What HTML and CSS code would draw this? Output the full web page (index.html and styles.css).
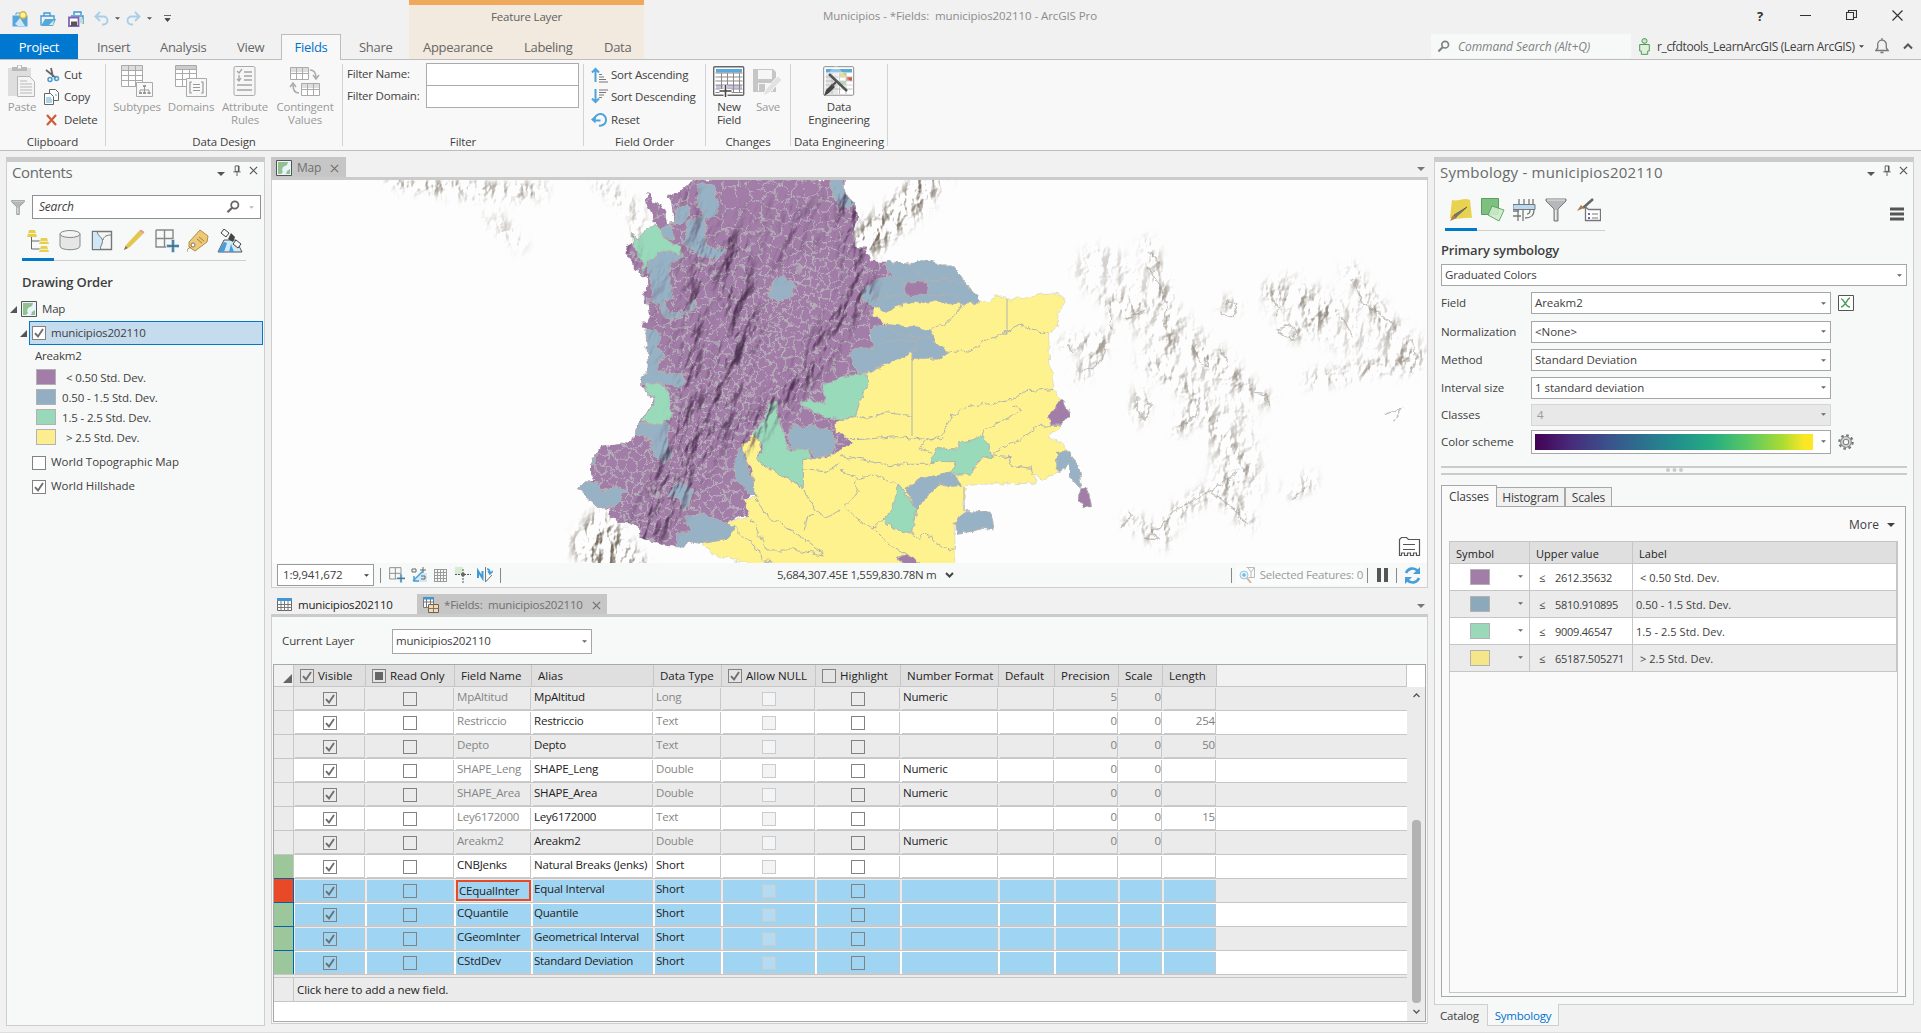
FILE: index.html
```html
<!DOCTYPE html>
<html lang="en">
<head>
<meta charset="utf-8">
<title>Municipios - ArcGIS Pro</title>
<link rel="stylesheet" href="styles.css">
</head>
<body>
<svg class="defs" width="0" height="0">
  <symbol id="tri" viewBox="0 0 8 4"><path d="M0 0h8L4 4z" fill="currentColor"/></symbol>
  <symbol id="check" viewBox="0 0 12 12"><path d="M2 6.2l3 3.3L10 2" fill="none" stroke="#6e6e6e" stroke-width="1.9"/></symbol>
  <symbol id="x" viewBox="0 0 10 10"><path d="M1 1l8 8M9 1l-8 8" fill="none" stroke="currentColor" stroke-width="1.3"/></symbol>
  <symbol id="pin" viewBox="0 0 8 12"><path d="M2 1h4v6H2zM0 7.5h8M4 8v4" fill="none" stroke="currentColor"/><path d="M5 1h1.5v6H5z" fill="currentColor"/></symbol>
  <symbol id="lens" viewBox="0 0 14 14"><circle cx="8.8" cy="5" r="3.6" fill="none" stroke="currentColor" stroke-width="1.8"/><path d="M6.3 7.5L1.5 12.3" stroke="currentColor" stroke-width="2.2"/></symbol>
  <symbol id="funnel" viewBox="0 0 22 24"><path d="M1 1h20v2l-8 8v12h-4V11L1 3z" fill="#b5b7ba" stroke="#7a7a7a"/><path d="M2 2h18" stroke="#e8e8e8"/><path d="M10 12h1.5v10H10z" fill="#eee"/></symbol>
  <symbol id="mapico" viewBox="0 0 16 16"><path d="M.5.5h15v15H.5z" fill="#e8f3fb" stroke="#555"/><path d="M2 2h10l-1 3-4 2-1 3 1 2-2 2H2z" fill="#93c08f"/><path d="M10 14l1-3 3-2v5z" fill="#93c08f"/></symbol>
  <symbol id="addgrid" viewBox="0 0 24 24"><path d="M1 1h17v9M1 1v17h10M1 9.500h17M9.500 1v17" fill="none" stroke="#888" stroke-width="1.400"/><path d="M18 10.500v13M11.500 17h13" stroke="#9bd0f0" stroke-width="3.600"/><path d="M18 11v12M12 17h12" stroke="#45606e" stroke-width="1.400"/></symbol>
</svg>

<header class="titlebar">
  <div class="qat">
    <svg width="16" height="16"><path d="M.5 4.500h15v11H.5z" fill="#56a7dc"/><path d="M4 4V2h6v2" fill="none" stroke="#56a7dc"/><path d="M3 13l5-6 5 8H6z" fill="#cfe8f7"/><circle cx="11" cy="4" r="3.200" fill="#fff3a0" stroke="#d6b93a" stroke-width="1.400"/></svg>
    <svg width="16" height="16"><path d="M1 14.500V5h13v3M4 5V2h6v3" fill="none" stroke="#3f97d3" stroke-width="1.300"/><path d="M1 15l4-7h11l-3 7z" fill="#56a7dc"/><path d="M9 14l5-5-1 5z" fill="#d9efd5"/></svg>
    <svg width="17" height="16"><path d="M3 5h12v8M6 4V1h7v3" fill="none" stroke="#3f97d3" stroke-width="1.400"/><path d="M1 6.500h9.500V15H1z" fill="#fff" stroke="#8264b4" stroke-width="1.800"/><path d="M3 10.500h6V15H3z" fill="#555"/><path d="M12 6l3 2v5l-3-1z" fill="#bfe0d0"/></svg>
    <svg class="undo" width="15" height="15"><path d="M6 1L1.500 5.500 6 10M2 5.500h7.500a4 4 0 010 8H8" fill="none" stroke="#a9cfe8" stroke-width="1.900"/></svg>
    <svg class="s5" width="5" height="3"><use href="#tri"/></svg>
    <svg class="redo" width="15" height="15"><path d="M9 1l4.500 4.500L9 10M13 5.500H5.500a4 4 0 000 8H7" fill="none" stroke="#a9cfe8" stroke-width="1.900"/></svg>
    <svg class="s5" width="5" height="3"><use href="#tri"/></svg>
    <svg class="cust" width="7" height="7"><path d="M0 .5h7M1 3.500h5L3.500 6.500z" fill="#444" stroke="#444" stroke-width=".8"/></svg>
  </div>
  <div class="ctx-title">Feature Layer</div>
  <div class="app-title">Municipios - *Fields:&nbsp; municipios202110 - ArcGIS Pro</div>
  <div class="winbtns">
    <b>?</b>
    <svg width="11" height="11"><path d="M0 5.500h11" stroke="#333"/></svg>
    <svg width="11" height="11"><path d="M.5 2.500h7v7h-7zM2.500 2.500v-2h8v7h-2.500" fill="none" stroke="#333" stroke-width="1.100"/></svg>
    <svg width="11" height="11"><path d="M.5.500l10 10M10.500.500l-10 10" stroke="#333" stroke-width="1.200"/></svg>
  </div>
</header>

<nav class="tabs">
  <span class="tab project">Project</span><span class="tab t-insert">Insert</span><span class="tab t-analysis">Analysis</span><span class="tab t-view">View</span><span class="tab active">Fields</span><span class="tab t-share">Share</span>
  <div class="ctx"><span class="c-app">Appearance</span><span class="c-lab">Labeling</span><span>Data</span></div>
  <div class="cmd"><svg width="13" height="13"><use href="#lens"/></svg><i>Command Search (Alt+Q)</i></div>
  <div class="user"><svg width="11" height="17"><rect x="3" y=".7" width="5" height="4.500" rx="2" fill="#cfe6cb" stroke="#4d9a55"/><path d="M.7 6.500h9.600v6.500H8.700v3.300H2.300v-3.300H.7z" fill="#dff0dc" stroke="#4d9a55"/></svg><span>r_cfdtools_LearnArcGIS (Learn ArcGIS)</span><svg width="5" height="3"><use href="#tri"/></svg></div>
  <svg class="bell" width="14" height="16"><path d="M.8 12.500h12.400L11.300 10V6.500a4.300 4.300 0 00-8.600 0V10zM7 0v2M5.500 14.500h3" fill="none" stroke="#777" stroke-width="1.300"/></svg>
  <svg class="chev" width="10" height="7"><path d="M1 5.500l4-4 4 4" fill="none" stroke="#555" stroke-width="2"/></svg>
</nav>

<section class="ribbon">
  <div class="grp g-clip">
    <div class="gbody">
      <div class="big dis w-paste"><svg width="30" height="33"><path d="M1 3h23v28H1z" fill="#dedede"/><path d="M5 2h15v4H5z" fill="#b9b9b9"/><path d="M10.500 0h4v4h-4z" fill="#f8f8f8" stroke="#b9b9b9"/><path d="M10.500 11.500h12l5 5v15h-17z" fill="#f4f4f4" stroke="#b5b5b5"/><path d="M13 16h7M13 19h12M13 22h12M13 25h12M13 28h12" stroke="#b9b9b9"/></svg><span>Paste</span></div>
      <div class="list">
        <div><svg width="16" height="16"><path d="M7 1l2 9M2 3l10 8" stroke="#666" stroke-width="1.800"/><circle cx="6" cy="12.500" r="2" fill="none" stroke="#4a9bd1" stroke-width="1.500"/><circle cx="12.500" cy="11.500" r="2" fill="none" stroke="#4a9bd1" stroke-width="1.500"/></svg><span>Cut</span></div>
        <div><svg width="16" height="16"><path d="M5.500.500h6l3 3v8h-9z" fill="#fff" stroke="#666"/><path d="M.5 4.500h6l3 3v8h-9z" fill="#fff" stroke="#666"/><path d="M2 9h5M2 11h6M2 13h6M11 6h2" stroke="#58a8dc"/></svg><span>Copy</span></div>
        <div><svg width="16" height="16"><path d="M3 3l9 10M12 3L3 13" stroke="#cd5c3c" stroke-width="2.200"/></svg><span>Delete</span></div>
      </div>
    </div><div class="glabel">Clipboard</div>
  </div>
  <div class="grp g-design">
    <div class="gbody">
      <div class="big dis w54"><svg width="32" height="33"><path d="M.5.500h21v21H.5z" fill="#fff" stroke="#aaa"/><path d="M1 1h20v4H1z" fill="#ddd"/><path d="M1 5.500h20M1 10.500h20M1 15.500h20M7.500 1v20M14.500 1v20" stroke="#aaa"/><path d="M15.500 17.500h16v14h-16z" fill="#f8f8f8" stroke="#aaa"/><path d="M23.500 22v3M19 28v-3h9v3M23.500 25v3" fill="none" stroke="#999"/><path d="M22 20h3v2h-3zM18 27h3v2h-3zM22 27h3v2h-3zM26.500 27h3v2h-3z" fill="#999"/></svg><span>Subtypes</span></div>
      <div class="big dis w54"><svg width="32" height="33"><path d="M.5.500h21v21H.5z" fill="#fff" stroke="#aaa"/><path d="M1 1h20v3H1z" fill="#ccc"/><path d="M1 4.500h20M1 8.500h20M1 14.500h20M7.500 4v17M14.500 4v17" stroke="#aaa"/><path d="M11.500 13.500h20v18h-20z" fill="#f8f8f8" stroke="#aaa"/><path d="M17 17h-2v11h2M26 17h2v11h-2M18 19.500h7M18 22.500h7M18 25.500h7" fill="none" stroke="#999" stroke-width="1.200"/></svg><span>Domains</span></div>
      <div class="big dis w54"><svg width="24" height="33"><rect x="1" y="1.500" width="21" height="29" rx="1.500" fill="#f6f6f6" stroke="#aaa"/><path d="M4 6l2 2 3-4M11 7h8M11 11h8M4 14l2 2 2-3M6 10v5M11 15h8M4 20h15M4 25h15" fill="none" stroke="#a5a5a5" stroke-width="1.300"/></svg><span>Attribute<br>Rules</span></div>
      <div class="big dis w66"><svg width="32" height="33"><path d="M1.500 2.500h18v12h-18zM12.500 18.500h18v12h-18z" fill="#fff" stroke="#aaa"/><path d="M2 3h17v4H2zM13 19h17v4H13z" fill="#ddd"/><path d="M1.500 8.500h18M7.500 3v12M13.500 3v12M12.500 24.500h18M18.500 19v12M24.500 19v12" stroke="#aaa"/><path d="M21 5c4 0 6 3 6 8M24 10l3 4 3-4M10 28c-4 0-6-3-6-8M1 22l3-4 3 4" fill="none" stroke="#aaa" stroke-width="1.500"/></svg><span>Contingent<br>Values</span></div>
    </div><div class="glabel">Data Design</div>
  </div>
  <div class="grp g-filter">
    <div class="frow"><label>Filter Name:</label><div class="finput"></div></div>
    <div class="frow"><label>Filter Domain:</label><div class="finput"></div></div>
    <div class="glabel push">Filter</div>
  </div>
  <div class="grp g-order">
    <div class="gbody"><div class="list">
      <div><svg width="17" height="16"><path d="M4.500 15V3M1 5.500L4.500 2 8 5.500" fill="none" stroke="#4ea3dc" stroke-width="2"/><path d="M8 7.500h3M8 10h5M8 12.500h7M8 15h9" stroke="#777"/></svg><span>Sort Ascending</span></div>
      <div><svg width="17" height="16"><path d="M4.500 0v12M1 9.500L4.500 13 8 9.500" fill="none" stroke="#4ea3dc" stroke-width="2"/><path d="M8 1h9M8 3.500h7M8 6h5M8 8.500h3" stroke="#777"/></svg><span>Sort Descending</span></div>
      <div><svg width="17" height="16"><path d="M3.500 7.500A5.800 5.800 0 1 1 8 13.500M3.500 8.500h6" fill="none" stroke="#4ea3dc" stroke-width="2"/><path d="M0 7.500l4.500-4v8z" fill="#4ea3dc"/></svg><span>Reset</span></div>
    </div></div><div class="glabel">Field Order</div>
  </div>
  <div class="grp g-changes">
    <div class="gbody">
      <div class="big w45"><svg width="32" height="33"><rect x=".7" y="1.700" width="30" height="28.500" rx="1" fill="#fff" stroke="#666" stroke-width="1.400"/><path d="M3 4h26v3.500H3z" fill="#5aa9dc"/><path d="M3 20h26v3.500H3z" fill="#cdbfe6"/><path d="M2.500 8h27M2.500 12h27M2.500 16h27M2.500 20h27M2.500 24h27M2.500 27.500h27M8.500 8v20M14.500 8v20M20.500 8v20M26.500 8v20" stroke="#8a8a8a"/><path d="M12.500 20v12M6.500 26h12" stroke="#fff" stroke-width="4"/><path d="M12.500 20v12M6.500 26h12" stroke="#444" stroke-width="1.600"/></svg><span>New<br>Field</span></div>
      <div class="big dis w32"><svg width="32" height="33"><path d="M1 4h20l3 3v20H1z" fill="#c6c6c6"/><path d="M6 5h14v9H6zM6 18h15v8H6z" fill="#f6f6f6"/><path d="M7 19h6v7H7z" fill="#c6c6c6"/><path d="M11 31l3-7 12-13 4 4-13 13z" fill="#e2e2e2" stroke="#f8f8f8"/></svg><span>Save</span></div>
    </div><div class="glabel">Changes</div>
  </div>
  <div class="grp g-eng">
    <div class="gbody"><div class="big w96"><svg width="32" height="33"><rect x=".7" y="1.700" width="30" height="28.500" rx="1" fill="#fff" stroke="#8a8a8a"/><path d="M3 4h26v3.500H3z" fill="#5aa9dc"/><path d="M3 8h12v21H3z" fill="#e6e6e6"/><path d="M17 8h6v4h-6z" fill="#e3cc45"/><path d="M23 12h6v4h-6z" fill="#cc5a37"/><path d="M17 16h6v4h-6z" fill="#8fc292"/><path d="M2.500 12h27M2.500 16h27M2.500 20h27M2.500 24h27M9 8v21M16.500 8v21M23 8v21" stroke="#bbb"/><path d="M13 0L4 9l17 19 9-9z" fill="#fff" opacity=".35"/><path d="M1 31l2-6 6-6 3 3-6 6z" fill="#444"/><path d="M6 9l18 17" stroke="#555" stroke-width="2.600"/><path d="M9 21l5-5" stroke="#555" stroke-width="2.400"/></svg><span>Data<br>Engineering</span></div></div>
    <div class="glabel">Data Engineering</div>
  </div>
</section>

<main class="work">
  <aside class="pane contents">
    <div class="pane-head"><h2>Contents</h2><svg class="p-tri" width="8" height="4"><use href="#tri"/></svg><svg width="8" height="11"><use href="#pin"/></svg><svg class="p-x" width="9" height="9"><use href="#x"/></svg></div>
    <div class="csearch"><svg width="14" height="17"><use href="#funnel"/></svg><div class="sbox"><i>Search</i><svg class="lens" width="14" height="14"><use href="#lens"/></svg><svg class="lite" width="5" height="3"><use href="#tri"/></svg></div></div>
    <div class="toolrow">
      <svg width="24" height="24"><path d="M4.500 6v14M4.500 12h10M4.500 20h10" stroke="#666" fill="none"/><path d="M2 1h6l2 7H0zM14 9h6l2 6H12zM14 17h6l2 6H12z" fill="#e6cf4c"/><path d="M0 4.500h10M12 12.300h10M12 20.300h10" stroke="#f7f9f9" stroke-width=".8"/></svg>
      <svg width="24" height="24"><path d="M1 5v12c0 5 20 5 20 0V5" fill="#e6e6e6" stroke="#888"/><ellipse cx="11" cy="5" rx="10" ry="3.500" fill="#f3f3f3" stroke="#888"/></svg>
      <svg width="24" height="24"><path d="M1.500 2.500h19v18h-19z" fill="#f5f5f5" stroke="#777" stroke-width="1.400"/><path d="M2 3h5c1 5 5 6 5 9s-2 4-2 8H2z" fill="#cfe8f8"/><path d="M6 2.500c1 5 6 6 5.500 10S9 17 9.500 20.500M12 11c1-4 4-5 8.500-5" fill="none" stroke="#777"/></svg>
      <svg width="24" height="24"><path d="M1 21l2-5L16 2l4 3L7 18z" fill="#e4c64a"/><path d="M1 21l1.500-4 2.500 2z" fill="#777"/><path d="M16 2l2-1.500 3.500 2.500L20 5z" fill="#e29a94"/></svg>
      <svg width="24" height="24"><use href="#addgrid"/></svg>
      <svg width="24" height="24"><path d="M2 13L13 1l8 6-1 6L8 22l-6-4z" fill="#ecc97b" stroke="#b98c3a"/><circle cx="6" cy="16" r="2" fill="#fff" stroke="#777"/><path d="M0 23c0-5 3-3 5-6M10 10l5 4M12 8l5 4" stroke="#a77d35" fill="none"/></svg>
      <svg width="26" height="24"><path d="M1 23l6-12h12l6 12z" fill="#cfeaf8" stroke="#555"/><path d="M1 23l6-10 3 1-3 9zM14 15l3 8h-5z" fill="#4a9bd6"/><path d="M7 0l5 4-3 4-5-4zM19 11l5 4-3 4-5-4z" fill="#f7f9f9" stroke="#444"/><path d="M11 10l3-6 4 4-2 5z" fill="#444"/></svg>
    </div>
    <div class="underline"><b></b></div>
    <h3>Drawing Order</h3>
    <div class="tree">
      <div class="trow t-map"><svg width="7" height="7"><path d="M7 0v7H0z" fill="#555"/></svg><svg class="mi" width="16" height="16"><use href="#mapico"/></svg><span>Map</span></div>
      <div class="trow t-layer"><svg width="7" height="7"><path d="M7 0v7H0z" fill="#555"/></svg><div class="sel"><span class="cb"><svg width="12" height="12"><use href="#check"/></svg></span><span class="muni">municipios202110</span></div></div>
      <div class="t-field">Areakm2</div>
      <div class="leg"><i class="sw purple"></i><span class="sp">&lt; 0.50 Std. Dev.</span></div>
      <div class="leg"><i class="sw blue"></i><span>0.50 - 1.5 Std. Dev.</span></div>
      <div class="leg"><i class="sw green"></i><span>1.5 - 2.5 Std. Dev.</span></div>
      <div class="leg"><i class="sw yellow"></i><span class="sp">&gt; 2.5 Std. Dev.</span></div>
      <div class="base"><span class="cb"></span><span class="wide2">World Topographic Map</span></div>
      <div class="base"><span class="cb"><svg width="12" height="12"><use href="#check"/></svg></span><span class="wide2">World Hillshade</span></div>
    </div>
  </aside>

  <section class="center">
    <div class="view-tabs"><div class="vtab grey"><svg width="16" height="16"><use href="#mapico"/></svg><span>Map</span><svg class="tx" width="9" height="9"><use href="#x"/></svg></div><svg class="vt-tri" width="8" height="4"><use href="#tri"/></svg></div>
    <div class="mapview">
      <svg class="map" width="1155" height="383" viewBox="272 180 1155 383">
        <defs>
          <filter id="rough" filterUnits="userSpaceOnUse" x="272" y="180" width="1155" height="383" color-interpolation-filters="sRGB"><feTurbulence type="fractalNoise" baseFrequency=".13" numOctaves="3" seed="4"/><feDisplacementMap in="SourceGraphic" scale="7" xChannelSelector="R" yChannelSelector="G"/></filter>
          <filter id="rougher" filterUnits="userSpaceOnUse" x="272" y="180" width="1155" height="383" color-interpolation-filters="sRGB"><feTurbulence type="fractalNoise" baseFrequency=".09" numOctaves="2" seed="14"/><feDisplacementMap in="SourceGraphic" scale="10" xChannelSelector="R" yChannelSelector="G"/></filter>
          <filter id="andes" filterUnits="userSpaceOnUse" x="400" y="50" width="640" height="700" color-interpolation-filters="sRGB"><feTurbulence type="fractalNoise" baseFrequency=".075 .034" numOctaves="4" seed="9"/><feDiffuseLighting surfaceScale="7" diffuseConstant="1" lighting-color="#fff"><feDistantLight azimuth="200" elevation="45"/></feDiffuseLighting><feColorMatrix values="0 0 0 0 .25  0 0 0 0 .14  0 0 0 0 .26  -1.1 0 0 0 .82"/></filter>
          <filter id="relief" filterUnits="userSpaceOnUse" x="272" y="180" width="1155" height="383" color-interpolation-filters="sRGB"><feTurbulence type="fractalNoise" baseFrequency=".075 .05" numOctaves="4" seed="21"/><feDiffuseLighting surfaceScale="8" diffuseConstant="1" lighting-color="#fff"><feDistantLight azimuth="215" elevation="45"/></feDiffuseLighting><feColorMatrix values="0 0 0 0 .48  0 0 0 0 .44  0 0 0 0 .39  -1.5 0 0 0 1"/></filter>
          <filter id="soft" filterUnits="userSpaceOnUse" x="0" y="0" width="1600" height="700"><feGaussianBlur stdDeviation="6"/></filter>
          <clipPath id="west">
            <path transform="translate(260 150) scale(.37 .3333)" d="M1170 88L1130 130 1100 135 1115 160 1120 215 1100 220 1095 190 1080 160 1060 155 1048 128 1040 150 1060 190 1065 222 1030 260 1015 275 1005 250 1008 280 995 285 990 310 1010 340 1010 355 1030 378 1048 380 1050 410 1035 435 1038 455 1050 465 1057 495 1050 515 1032 518 1030 528 1043 532 1043 570 1050 620 1047 670 1028 685 1028 705 1045 730 1065 745 1055 770 1030 810 1015 830 1008 855 998 880 950 885 920 890 905 915 892 945 892 970 905 990 880 992 858 1015 910 1068 942 1078 945 1095 975 1118 1000 1120 1030 1140 1028 1165 1060 1175 1100 1188 1150 1192 1160 1172 1190 1178 1265 1165 1283 1132 1260 1118 1300 1098 1322 1098 1308 1048 1400 1000 1580 900V88z"/>
            <path transform="translate(840 150) scale(.3827 .3333)" d="M-2 88H5L15 135 40 165 45 210 38 240 40 290 68 293 80 335H120L125 350 140 380 85 465 85 490 118 523 90 530 100 545 75 555 90 595 50 610 45 665 70 668 0 690 0 850 35 880 0 905z"/>
          </clipPath>
          <mask id="mAndes"><g fill="none" stroke="#fff" stroke-linecap="round" filter="url(#soft)"><path d="M850 200L860 290 800 380 740 440" stroke-width="26"/><path d="M730 250L745 330 710 430 650 530" stroke-width="34"/><path d="M700 260L690 400 640 530" stroke-width="18"/><path d="M690 190L700 260M620 215l20 60M800 210l-20 60" stroke-width="14" opacity=".5"/><path d="M640 340L720 240 820 220" stroke-width="60" opacity=".2"/></g></mask>
          <mask id="mRelief"><g fill="none" stroke="#fff" stroke-linecap="round" filter="url(#soft)">
            <path d="M395 180L450 188 505 192 540 190" stroke-width="12"/><path d="M490 215L520 245M600 182L640 215 635 240" stroke-width="9" opacity=".7"/>
            <path d="M940 170L895 212 862 238M925 195L870 245" stroke-width="22"/><path d="M600 530L630 570M590 545l25 25" stroke-width="34"/>
            <path d="M1147 245L1168 305 1168 350M1110 305H1140M1065 345L1105 340 1080 375M1225 305h8M1268 290L1332 310 1295 335M1350 270L1385 320 1415 360M1190 345L1265 400M1140 395v22M1145 360L1200 400 1180 430M1210 420L1245 470 1180 510 1155 540M1130 520L1165 540M1225 500l25 22M1290 490l20-10M1310 380L1420 360" stroke-width="11" opacity=".85"/><path d="M1100 270L1220 380 1240 480M1290 300L1400 350" stroke-width="50" opacity=".3"/></g></mask>
          <path id="yellowLand" d="M85 465L165 462 215 455 320 460 365 455 385 458 405 440 435 447 470 445 520 435 550 428 580 432 588 460 570 490 568 530 545 550 548 640 560 720 578 750 600 795 575 825 545 862 575 875 598 905 570 910 568 965 535 990 510 975 508 1000 365 1003 325 1008 325 1085 298 1115 303 1250H-187L-249 1238-327 1215-366 1178-293 1165-276 1132-298 1118-238 1098-251 1048-223 1045-223 1010-235 950-259 890-225 855-204 870-216 930-162 970-97 1015-95 925-37 922 0 900 35 880 0 850-11 850V815L40 798 55 745 73 700 70 668 105 650 188 610 190 628 260 627 285 607 245 575 237 540 118 523 85 490z"/>
        </defs>
        <rect x="272" y="180" width="1155" height="383" fill="#fdfdfd"/>
        <g mask="url(#mRelief)"><rect x="272" y="180" width="1155" height="383" filter="url(#relief)"/></g>
        <g fill="none" stroke="#9b948b" stroke-width="1.400" opacity=".55" filter="url(#rough)"><path d="M1150 252l10 12-8 12M1148 268l14 20 5 18-3 22M1110 302l2 28M1125 318l20-6M1068 343l3 10M1104 345c2 12-8 24-20 26M1222 305c8-8 16-2 14 6s-14 8-14 0M1270 300l10 8-4 8M1278 330l12-6 8 8-6 8zM1352 280l10 22 20 14 12 8M1342 316l10 22M1412 340l4 20-5 14M1192 345l8 18 8 4-3-10M1220 350l8 12M1138 396l-1 16 8 8 6-14-5-8M1200 396l-5 20-18 12M1122 528l10-14-3-4M1210 493l20 12 18 20M1158 530l20-22 30-16 30-20M1150 528l8 12-14-2M1255 392l12 2 1 12M1292 500l16-14M1385 415l16-6-8 12"/></g>
        <g filter="url(#rough)">
          <g clip-path="url(#west)"><rect x="560" y="170" width="340" height="400" fill="#a27da8"/><g filter="url(#rougher)"><path id="cells" fill="none" stroke="#b7aebb" stroke-width="1"/></g></g>
          <g class="land" transform="translate(840 150) scale(.3827 .3333)">
            <use href="#yellowLand" fill="#fef28f"/>
            <path fill="none" d="M323 460L305 490 285 515 240 538M285 607L320 600 345 605 372 572 410 560 440 540 475 525 505 540 545 550M560 715L520 720 485 722 450 750 400 760 330 770 290 800 270 850 205 890 240 910M450 765L475 780 410 820 375 840 372 858M575 825L520 830 470 865 400 910M0 810L45 798 70 808 120 788 188 797M0 870L60 868 150 860 240 870 270 860M0 920L60 930 135 950 170 940 235 940M0 960L50 985 85 972 155 1005M45 985L40 1000 50 1025 10 1070 60 1120 90 1140 130 1190 180 1215M110 1110L85 1135M190 1150L205 1165 230 1150 250 1178 280 1200 303 1190M400 915L445 920 440 945 500 955 505 975"/>
            <path class="fb" d="M120 335L190 340 225 328 265 345 295 345 365 455 320 460 215 455 165 462 120 487 85 465 60 450 50 430 100 385 140 380 122 350zM90 530L118 523 237 540 245 575 285 607 260 627 190 628 188 610 105 650 70 668 45 665 25 620 40 595 85 595 80 560zM-30 88H5L15 135 35 165 20 175-10 155zM565 910L600 905 620 945 635 1010 625 1012 600 980 600 940 568 968zM330 1085L395 1090 403 1140 375 1135 340 1145 305 1150 298 1115zM170 1015L215 985 290 965 320 1010 290 1012 260 1000 198 1075z"/>
            <path fill="none" d="M175 340L185 360 232 395 270 385 330 402M140 380L167 400M85 448L170 432 228 437 290 432 320 455M120 530L165 560 237 562M100 580L145 568 205 575 188 610"/>
            <path class="fg" d="M238 935L250 895 305 900 310 880 375 858 398 920 365 930 340 975 290 975 302 935zM155 1005L198 1075 190 1150 150 1142 110 1110 135 1080zM70 668L73 700 55 745 40 798 0 810-15 808-50 795-107 760-100 748-40 760-45 700-10 690 0 682z"/>
            <path class="fp" d="M580 748L603 795 575 825 552 825 545 795zM628 1015H645L655 1070 635 1073 625 1050zM167 400L232 395 228 437 170 432zM150 1225L180 1215 208 1238 165 1245z"/>
          </g>
          <g class="land" transform="translate(260 150) scale(.37 .3333)">
            <path class="fg" d="M1065 222L1080 235 1095 265 1130 285 1145 322 1105 302 1080 308 1045 340 1030 378 1030 330 1008 290 1005 250 1018 275 1045 235zM1040 700L1095 705 1110 740 1108 780 1120 790 1090 825 1030 815 1065 760 1065 740 1040 725zM1395 755L1400 800 1430 900 1485 895 1490 925 1470 925 1468 1015 1400 970 1345 935 1360 890 1330 855 1365 800 1375 760z"/>
            <path class="fb" d="M1185 100L1225 105 1242 165 1230 200 1200 215 1210 290 1262 300 1235 328 1190 320 1150 280 1155 215 1195 200 1180 150zM1130 165L1160 170 1150 215 1120 222zM1083 235L1110 220 1118 270 1095 262zM1105 302L1145 322 1110 340 1108 400 1120 445 1095 450 1100 490 1160 480 1170 445 1182 465 1130 508 1090 500 1080 460 1060 455 1055 380 1045 345 1080 308zM1043 532L1085 550 1070 590 1092 615 1070 660 1140 675 1148 695 1130 720 1100 700 1030 700 1028 685 1050 660zM1025 820L1105 825 1100 870 1115 920 1090 940 1055 900 1060 870 1010 850zM858 1015L880 992 920 1005 925 1030 960 1005 988 1020 960 1070 920 1075 900 1055zM1100 1040L1130 995 1175 1020 1145 1085 1130 1040zM1145 1100L1200 1092 1283 1132 1265 1165 1190 1178 1160 1172 1150 1192 1125 1190 1125 1150 1165 1140zM1385 395L1415 375 1450 410 1430 440 1400 455 1375 440zM1440 825L1485 830 1540 840 1560 870 1545 910 1500 925 1490 900 1435 895 1428 860zM1300 890L1320 960 1337 1010 1337 1045 1285 990 1280 940zM905 920L910 940 895 945z"/>
            <path fill="none" d="M1400 970L1468 1015 1500 1080 1530 1105 1568 1080M1337 1045L1370 1095 1450 1150 1525 1215 1440 1200 1370 1200 1330 1105M1470 960L1530 965 1568 940M1470 1145L1480 1100 1500 1090M1283 1135L1320 1175 1350 1200 1355 1230 1390 1238"/>
          </g>
        </g>
        <path d="M912 355V436M1007 299V329M964 487V511" fill="none" stroke="#b2b2b2"/>
        <g clip-path="url(#west)"><g mask="url(#mAndes)"><g transform="rotate(18 720 370)"><rect x="400" y="50" width="640" height="700" filter="url(#andes)"/></g></g></g>
        <path d="M1399.500 555.500v-16l2-2h5l2 2h11v16h-3v-2.500h-3v2.500h-3v-2.500h-3v2.500h-3v-2.500h-3v2.500zM1403 544.500h12M1403 549.500h12" fill="#fff" stroke="#555" stroke-width="1.200"/>
      </svg>
      <div class="status">
        <div class="scale"><span>1:9,941,672</span><svg width="5" height="3"><use href="#tri"/></svg></div><b class="vb"></b>
        <svg width="16" height="16"><use href="#addgrid"/></svg>
        <svg width="17" height="16"><path d="M3 15l8-9h5v9z" fill="#cfe8f7"/><path d="M1 2h4v3H1zM10 9h4v3h-4M12 0v6M9 3h6" fill="none" stroke="#666"/><path d="M2 14L12 4M3 9v5h5" stroke="#4a9fd8" stroke-width="1.500" fill="none"/></svg>
        <svg width="13" height="13"><path d="M0 .5h13M0 3.500h13M0 6.500h13M0 9.500h13M0 12.500h13M.5 0v13M3.500 0v13M6.500 0v13M9.500 0v13M12.500 0v13" stroke="#999"/></svg>
        <svg width="16" height="16"><path d="M0 0h8v7H0z" fill="#d6ecd3"/><path d="M0 7.500h16M8 2v14" stroke="#555" stroke-dasharray="2 1"/><circle cx="8" cy="7.500" r="2" fill="#666"/></svg>
        <svg width="16" height="16"><path d="M1 11V4l4.500 7V4" fill="none" stroke="#3f9ad8" stroke-width="2"/><path d="M8.500 0v15L15 8" fill="none" stroke="#777"/><path d="M10 2c3 0 3 2 3 4M11 4l2 3 3-3" fill="none" stroke="#3f9ad8" stroke-width="1.500"/></svg>
        <b class="vb v2"></b><span class="coords">5,684,307.45E 1,559,830.78N m</span>
        <svg class="cchev" width="9" height="6"><path d="M1 1l3.500 3.500L8 1" fill="none" stroke="#444" stroke-width="2"/></svg>
        <b class="vb v3"></b>
        <div class="selfeat"><svg width="17" height="16"><path d="M7.500.500h8v10h-6M9 1l3 4v5M15 1l-3 4" fill="none" stroke="#bbb"/><circle cx="5" cy="8" r="4" fill="#e2f2fb" stroke="#9cc9e6"/><path d="M3 8h4M5 6v4" stroke="#5aa5d5"/><path d="M8 11l4 5" stroke="#dcb493" stroke-width="2"/></svg><span>Selected Features: 0</span></div>
        <b class="vb v4"></b><svg class="pause" width="11" height="14"><path d="M0 0h4v14H0zM7 0h4v14H7z" fill="#555"/></svg><b class="vb v5"></b>
        <svg class="refresh" width="17" height="17"><path d="M2 6c2-5 8-6 12-2M15 11c-2 5-8 6-12 2" fill="none" stroke="#4a9fd8" stroke-width="2.600"/><path d="M16 0v7H9zM1 17v-7h7z" fill="#4a9fd8"/></svg>
      </div>
    </div>

    <div class="view-tabs two">
      <div class="vtab plain"><svg width="16" height="14"><path d="M.5.500h14v12H.5z" fill="#fff" stroke="#666"/><path d="M0 0h15v3H0z" fill="#3f97d3"/><path d="M0 6.500h15M0 9.500h15M4 3v10M7.500 3v10M11 3v10" stroke="#777"/></svg><span>municipios202110</span></div>
      <div class="vtab grey fields"><svg width="17" height="16"><path d="M.5.500h10v10H.5z" fill="#fff" stroke="#777"/><path d="M0 0h11v2.500H0z" fill="#3f97d3"/><path d="M0 5h11M3.500 2v8M7.500 2v8" stroke="#777"/><path d="M5.500 7.500h10v8h-10z" fill="#fcd9a4" stroke="#666"/><path d="M10.500 8v7M6 11.500h9" stroke="#777"/></svg><span>*Fields:&nbsp; municipios202110</span><svg class="tx" width="9" height="9"><use href="#x"/></svg></div>
      <svg class="vt-tri" width="8" height="4"><use href="#tri"/></svg>
    </div>
    <div class="fieldsview">
      <div class="curlayer"><span>Current Layer</span><div class="combo"><span>municipios202110</span><svg width="5" height="3"><use href="#tri"/></svg></div></div>
      <div class="table">
        <div class="thead">
          <div class="corner"><svg width="9" height="9"><path d="M9 0v9H0z" fill="#666"/></svg></div>
          <div><span class="cb"><svg width="12" height="12"><use href="#check"/></svg></span>Visible</div>
          <div><span class="cb"><i></i></span>Read Only</div>
          <div>Field Name</div><div>Alias</div><div>Data Type</div>
          <div><span class="cb"><svg width="12" height="12"><use href="#check"/></svg></span>Allow NULL</div>
          <div><span class="cb"></span>Highlight</div>
          <div>Number Format</div><div>Default</div><div>Precision</div><div>Scale</div><div>Length</div><div class="hrest"></div>
        </div>
        <div class="tbody">
          <div class="rows"><div id="rows"></div><div class="addrow"><span></span><span>Click here to add a new field.</span></div></div>
          <div class="scroll"><svg width="7" height="5"><path d="M.5 4l3-3 3 3" fill="none" stroke="#555" stroke-width="1.300"/></svg><div class="thumb"></div><svg width="7" height="5"><path d="M.5 1l3 3 3-3" fill="none" stroke="#555" stroke-width="1.300"/></svg></div>
        </div>
      </div>
    </div>
  </section>

  <aside class="right">
    <div class="pane symb">
      <div class="pane-head"><h2 class="wide">Symbology - municipios202110</h2><svg class="p-tri" width="8" height="4"><use href="#tri"/></svg><svg width="8" height="11"><use href="#pin"/></svg><svg class="p-x" width="9" height="9"><use href="#x"/></svg></div>
      <div class="symtools">
        <svg width="24" height="24"><path d="M3 2c6 2 12-3 18 0l2 18c-8-1-14 2-22 0z" fill="#e8d24f"/><path d="M18 9L7 19l-2-2z" fill="#777" stroke="#666"/><path d="M1 23l3-6 4 3z" fill="#b07a4a"/></svg>
        <svg width="24" height="24"><path d="M.5.500h17v16H.5z" fill="#7fc080" stroke="#55a05a"/><path d="M11 8l12 4-5 11-11-6z" fill="#cdebcb" stroke="#5aa05e" opacity=".9"/></svg>
        <svg width="24" height="24"><path d="M6 1v5M11 1v5M16 1v5M20 1v5M0 13h6M0 18h8M5 12v11M10 12v11M14 16c2 0 3-1 3-4M12 20c6 0 9-2 9-8" fill="none" stroke="#777" stroke-width="1.300"/><path d="M0 6.500h22v5H0z" fill="#b9daf1" stroke="#777"/></svg>
        <svg width="22" height="24"><use href="#funnel"/></svg>
        <svg width="24" height="24"><path d="M16 1L6 10" stroke="#666" stroke-width="2.500"/><path d="M0 13l4-6 3 3z" fill="#b07a4a"/><path d="M8.500 9v13.500h15v-11h-12z" fill="#fff" stroke="#777" stroke-width="1.300"/><path d="M11 15h2v2h-2zM11 19h2v2h-2z" fill="#7a5bb0"/><path d="M15 16h6M15 20h6" stroke="#777"/></svg>
        <svg class="burger" width="14" height="14"><path d="M0 2h14M0 7h14M0 12h14" stroke="#555" stroke-width="3"/></svg>
      </div>
      <div class="underline u2"><b></b></div>
      <h3>Primary symbology</h3>
      <div class="combo c-main"><span>Graduated Colors</span><svg width="5" height="3"><use href="#tri"/></svg></div>
      <div class="form">
        <label>Field</label><div class="combo"><span>Areakm2</span><svg width="5" height="3"><use href="#tri"/></svg></div><svg width="16" height="16"><path d="M.5.500h15v15H.5z" fill="#fff" stroke="#555"/><path d="M3 4c3-1 4 8 9 8M12 3c-3 0-4 8-9 9" fill="none" stroke="#4f9d57" stroke-width="1.500"/></svg>
        <label>Normalization</label><div class="combo"><span>&lt;None&gt;</span><svg width="5" height="3"><use href="#tri"/></svg></div><i></i>
        <label>Method</label><div class="combo"><span>Standard Deviation</span><svg width="5" height="3"><use href="#tri"/></svg></div><i></i>
        <label>Interval size</label><div class="combo"><span>1 standard deviation</span><svg width="5" height="3"><use href="#tri"/></svg></div><i></i>
        <label>Classes</label><div class="combo off"><span>4</span><svg width="5" height="3"><use href="#tri"/></svg></div><i></i>
        <label>Color scheme</label><div class="combo ramp"><span class="viridis"></span><svg width="5" height="3"><use href="#tri"/></svg></div><svg width="16" height="16"><circle cx="8" cy="8" r="6.700" fill="none" stroke="#777" stroke-width="2.200" stroke-dasharray="2.600 2.660"/><circle cx="8" cy="8" r="4" fill="none" stroke="#777" stroke-width="3.600"/><circle cx="8" cy="8" r="4" fill="none" stroke="#d0d0d0" stroke-width="1.800"/></svg>
      </div>
      <div class="splitter"><svg width="17" height="4"><circle cx="2" cy="2" r="2" fill="#cbcbcb"/><circle cx="8.500" cy="2" r="2" fill="#cbcbcb"/><circle cx="15" cy="2" r="2" fill="#cbcbcb"/></svg></div>
      <div class="ctabs"><span class="on">Classes</span><span class="h">Histogram</span><span class="s">Scales</span></div>
      <div class="cbox">
        <div class="more">More<svg width="8" height="4"><use href="#tri"/></svg></div>
        <div class="ctable">
          <div class="cr ch"><span>Symbol</span><span>Upper value</span><span>Label</span></div>
          <div class="cr"><span><i class="sw purple"></i><svg width="5" height="3"><use href="#tri"/></svg></span><span><em>≤</em>2612.35632</span><span class="sp">&lt; 0.50 Std. Dev.</span></div>
          <div class="cr alt"><span><i class="sw blue"></i><svg width="5" height="3"><use href="#tri"/></svg></span><span><em>≤</em>5810.910895</span><span>0.50 - 1.5 Std. Dev.</span></div>
          <div class="cr"><span><i class="sw green"></i><svg width="5" height="3"><use href="#tri"/></svg></span><span><em>≤</em>9009.46547</span><span>1.5 - 2.5 Std. Dev.</span></div>
          <div class="cr alt"><span><i class="sw yellow dim"></i><svg width="5" height="3"><use href="#tri"/></svg></span><span><em>≤</em>65187.505271</span><span class="sp">&gt; 2.5 Std. Dev.</span></div>
        </div>
      </div>
    </div>
    <div class="btabs"><span>Catalog</span><span class="on">Symbology</span></div>
  </aside>
</main>
<script src="app.js"></script>
</body>
</html>
```
FILE: styles.css
```css
* { box-sizing: border-box; }
body { margin: 0; width: 1921px; height: 1033px; overflow: hidden; background: #f1f1f1; color: #404040; font: 11.5px/16px "Open Sans", "Noto Sans", sans-serif; letter-spacing: -.2px; display: flex; flex-direction: column; white-space: nowrap; }
svg { display: block; flex: none; }
h2, h3 { margin: 0; font-weight: 400; }
.defs { display: none; }

.titlebar { height: 34px; flex: none; display: flex; }
.qat { width: 409px; padding: 11px 0 0 12px; display: flex; align-items: flex-start; gap: 12px; color: #555; }
.qat .undo { margin-left: -3px; }
.qat .s5 { margin: 6px -3px 0 -6px; }
.qat .redo { margin-left: -3px; }
.qat .cust { margin: 4px 0 0 3px; }
.ctx-title { width: 235px; border-top: 5px solid #f0a95b; background: #f3eadf; text-align: center; padding-top: 4px; color: #606060; }
.app-title { width: 632px; text-align: center; color: #8c8c8c; padding-top: 8px; letter-spacing: -.08px; }
.winbtns { flex: 1; display: flex; justify-content: flex-end; gap: 35px; padding: 10px 18px 0 0; color: #333; font-size: 13px; line-height: 12px; }
.winbtns b { width: 8px; }

.tabs { height: 26px; flex: none; display: flex; border-bottom: 1px solid #bdbdbd; font-size: 13px; line-height: 27px; color: #666; letter-spacing: -.3px; }
.tab { height: 26px; }
.tab.project { width: 78px; height: 25px; background: #0078d0; color: #fff; text-align: center; }
.t-insert { width: 82px; padding-left: 19px; }
.t-analysis { width: 77px; }
.t-view { width: 44px; }
.tab.active { width: 60px; border: 1px solid #bdbdbd; border-bottom: 0; background: #f8f8f8; color: #0071ce; text-align: center; line-height: 25px; }
.t-share { width: 68px; padding-left: 18px; }
.ctx { width: 235px; height: 25px; background: #f3eadf; padding-left: 14px; display: flex; }
.c-app { width: 101px; }
.c-lab { width: 80px; }
.cmd { margin-left: 787px; width: 200px; height: 24px; background: #f7f9f9; display: flex; align-items: center; padding-left: 6px; gap: 8px; font-size: 12px; color: #808080; letter-spacing: -.06px; }
.user { margin-left: 8px; width: 226px; display: flex; align-items: center; font-size: 12px; color: #404040; letter-spacing: -.36px; }
.user span { width: 209px; padding-left: 7px; }
.bell { margin: 4px 0 0 10px; }
.chev { margin: 9px 0 0 14px; }

.ribbon { height: 91px; flex: none; border-bottom: 1px solid #bdbdbd; background: #f8f8f8; display: flex; padding: 4px 0; }
.grp { border-right: 1px solid #d2d2d2; display: flex; flex-direction: column; height: 82px; }
.g-clip { width: 106px; } .g-design { width: 237px; } .g-filter { width: 241px; } .g-order { width: 122px; } .g-changes { width: 85px; } .g-eng { width: 97px; }
.gbody { height: 70px; display: flex; flex: none; }
.glabel { text-align: center; line-height: 16px; letter-spacing: -.1px; }
.big { display: flex; flex-direction: column; align-items: center; text-align: center; line-height: 13px; padding-top: 1px; }
.big svg { margin-bottom: 2px; }
.dis { color: #9a9a9a; }
.w-paste { width: 44px; }
.w54 { width: 54px; } .w66 { width: 66px; } .w32 { width: 32px; } .w45 { width: 46px; } .w96 { width: 96px; }
.g-design .gbody { padding-left: 4px; }
.list { display: flex; flex-direction: column; }
.list > div { height: 22px; display: flex; align-items: center; gap: 4px; }
.list > div:last-child { height: 24px; }
.g-order .list { padding-left: 7px; }
.g-order .list > div { gap: 3px; }
.g-filter { padding: 0 4px 0 4px; }
.frow { height: 22px; display: flex; align-items: center; justify-content: space-between; }
.g-filter .frow:first-child { margin-top: -1px; }
.finput { width: 153px; height: 23px; border: 1px solid #ababab; background: #fff; }
.push { margin-top: 27px; }

.work { flex: none; height: 882px; display: flex; border-bottom: 1px solid #dedede; padding: 6px 7px 0 6px; }
.pane { background: #f7f9f9; border: 1px solid #cfcfcf; border-top: 5px solid #cbcbcb; }
.pane-head { display: flex; align-items: center; color: #555; height: 22px; padding-right: 6px; }
.pane-head h2 { flex: 1; font-size: 15px; color: #6a6a6a; letter-spacing: -.35px; padding-left: 5px; margin-top: -2px; }
.pane-head .p-tri { margin: 1px 8px 0 0; }
.pane-head svg:nth-of-type(2) { margin-top: -5px; }
.pane-head .p-x { margin: -5px 0 0 8px; }
.contents { width: 259px; height: 869px; margin-right: 6px; }
.csearch { display: flex; margin-top: 11px; padding-left: 4px; gap: 7px; align-items: center; }
.sbox { width: 229px; height: 24px; border: 1px solid #8f8f8f; background: #fff; display: flex; align-items: center; font-size: 12px; padding: 0 6px; }
.sbox i { flex: 1; }
.sbox .lens { margin-right: 9px; color: #666; }
.lite { color: #bbb; }
.toolrow { display: flex; gap: 8px; padding: 10px 0 0 20px; height: 39px; }
.toolrow svg:last-child { margin-left: -2px; }
.underline { height: 3px; margin-left: 15px; width: 224px; border-bottom: 1px solid #cfcfcf; }
.underline b { display: block; width: 32px; height: 3px; background: #0079c8; }
h3 { font-weight: 600; font-size: 13px; letter-spacing: -.15px; line-height: 20px; color: #3e3e3e; }
.contents h3 { margin: 11px 0 0 15px; }
.trow { display: flex; align-items: center; }
.t-map { height: 24px; margin-top: 5px; padding-left: 3px; }
.t-map .mi { margin: 0 5px 0 4px; }
.t-layer { padding-left: 13px; height: 24px; }
.sel { margin-left: 2px; width: 234px; height: 24px; border: 1px solid #0079c8; background: #c5dbee; display: flex; align-items: center; padding-left: 2px; gap: 5px; }
.cb { width: 14px; height: 14px; flex: none; border: 1px solid #828282; background: #fff; display: inline-flex; align-items: center; justify-content: center; }
.t-field { height: 24px; line-height: 21px; padding-left: 28px; }
.leg { display: flex; height: 20px; align-items: flex-start; padding-left: 29px; gap: 6px; letter-spacing: -.15px; line-height: 18px; }
.leg .sp { margin-left: 4px; }
.wide2 { letter-spacing: -.05px; }
.sw { width: 20px; height: 16px; flex: none; border: 1px solid #b2b2b2; }
.purple { background: #a27da8; } .blue { background: #93aec2; } .green { background: #99d9b9; } .yellow { background: #fcee8e; } .dim { background: #f4e689; } .alt .blue { background: #8ca8bb; }
.base { display: flex; height: 24px; align-items: center; gap: 5px; padding-left: 25px; }
.base span:last-child { margin-top: -2px; }
.leg + .base { margin-top: 2px; }

.center { width: 1157px; margin-right: 6px; }
.view-tabs { height: 23px; border-bottom: 3px solid #cbcbcb; display: flex; align-items: flex-end; padding-right: 3px; }
.vtab { height: 20px; display: flex; align-items: center; color: #707070; font-size: 12px; letter-spacing: -.2px; padding-top: 2px; }
.vtab.grey { background: #c6c6c6; width: 75px; padding-left: 5px; }
.vtab span { margin-left: 5px; }
.vtab .tx { margin-left: 9px; color: #707070; }
.vt-tri { margin: 0 0 6px auto; color: #777; }
.mapview { border: 1px solid #cfcfcf; border-top: 0; }
.status { height: 24px; background: #f7f9f9; display: flex; align-items: center; padding-left: 5px; }
.status > svg { margin-right: 6px; }
.status > svg:nth-of-type(3) { margin-right: 8px; }
.scale { width: 100px; height: 22px; border: 1px solid #9a9a9a; background: #fff; display: flex; align-items: center; justify-content: space-between; padding: 0 4px 0 5px; }
.vb { width: 1px; height: 15px; background: #888; margin: 0 8px 0 6px; }
.vb.v2 { margin: 0 0 0 1px; }
.coords { margin-left: 276px; width: 167px; letter-spacing: -.3px; }
.status > .cchev { margin: 0 0 0 6px; }
.v3 { margin: 0 4px 0 277px; }
.selfeat { width: 129px; height: 20px; background: #fafbfb; display: flex; align-items: center; color: #9a9a9a; padding-left: 3px; gap: 4px; }
.v4 { margin: 0 9px 0 4px; }
.status > .pause { margin: 0 8px 0 0; }
.v5 { margin: 0 7px 0 0; }
.view-tabs.two { height: 29px; }
.vtab.plain { padding-left: 6px; width: 146px; color: #222; font-size: 11.500px; }
.vtab.grey.fields { width: 190px; padding-left: 6px; font-size: 11.500px; }
.fields span { margin-left: 4px; }
.fieldsview { height: 407px; background: #f7f9f9; border: 1px solid #cfcfcf; border-top: 0; padding: 0 1px; }
.curlayer { height: 47px; padding: 0 0 0 9px; display: flex; align-items: center; }
.curlayer > span { width: 110px; letter-spacing: -.1px; }
.combo { height: 22px; border: 1px solid #a6a6a6; background: #fff; display: flex; align-items: center; justify-content: space-between; padding: 0 4px 0 3px; }
.combo svg { color: #666; }
.curlayer .combo { width: 200px; height: 25px; margin-top: 1px; }
.table { height: 358px; border: 1px solid #a8a8a8; background: #fff; color: #222; }
.thead, .row { display: grid; grid-template-columns: 20px 72px 89px 77px 122px 68px 94px 85px 98px 56px 64px 44px 54px 1fr; }
.thead { height: 22px; width: 1133px; letter-spacing: 0; }
.thead > div { background: #dfdfdf; border-right: 1px solid #c6c6c6; border-bottom: 1px solid #c6c6c6; display: flex; align-items: center; padding-left: 6px; gap: 4px; }
.thead .cb { background: #e4e4e4; }
.thead .cb i { width: 8px; height: 8px; background: #666; }
.thead .corner { background: #f1f1f1; padding: 5px 0 0 9px; }
.thead .hrest { background: #f1f1f1; }
.tbody { display: flex; }
.rows { width: 1133px; }
.row { height: 24px; border-bottom: 1px solid #c6c6c6; padding-top: 1px; }
.row:nth-child(odd) { background: #ebebeb; }
.row > div { height: 22px; border-right: 1px solid #c8c8c8; border-bottom: 1px solid #cacaca; margin: 0 1px; padding: 0 3px 0 1px; line-height: 17px; display: flex; }
.row > div:first-child { margin: -1px 0 0; height: 23px; background: #ebebeb; border-bottom: 0; padding: 0; }
.row .c { justify-content: center; padding: 4px 0 0; }
.row .c .cb { background: transparent; }
.row .faint .cb { border-color: #c9cbcd; background: #f2f4f5; }
.row .n { justify-content: flex-end; padding-right: 0; color: #808080; }
.row .g { color: #868686; }
.row > .new { background: #9bc79b !important; }
.row.sel2 > div { background: #9fd4f2; }
.row.sel2 > .new, .row.sel2 > .bad { border-right: 1px solid #0063b0; border-top: 1px solid #0063b0; height: 24px; margin: -2px 0 0; }
.row > .bad { background: #e84a27 !important; }
.row.sel2 .faint .cb { background: #b3dbf2; }
.row.sel2 > .edit { border: 2px solid #e84a27; padding: 0 0 0 1px; height: 21px; line-height: 18px; }
.row > div.rest, .row.sel2 > div.rest { border: 0; background: none; }
.addrow { height: 27px; border-bottom: 1px solid #c6c6c6; padding-top: 2px; display: flex; background: #ebebeb; letter-spacing: -.08px; }
.addrow span { border-top: 1px solid #c6c6c6; height: 24px; padding: 4px 0 0 3px; flex: 1; }
.addrow span:first-child { flex: none; width: 20px; border-right: 1px solid #c6c6c6; }
.scroll { width: 18px; height: 334px; background: #ebebeb; display: flex; flex-direction: column; align-items: center; padding: 6px 0 7px; }
.thumb { width: 9px; height: 183px; border-radius: 4px; background: #b3b3b3; margin: 122px 0 auto; }

.symb { width: 480px; height: 848px; padding-right: 6px; }
.right { width: 480px; }
.symb .pane-head { padding-right: 0; margin-right: -1px; }
.pane-head .wide { letter-spacing: .22px; }
.symtools { display: flex; gap: 8px; padding: 14px 3px 0 14px; height: 44px; }
.symtools svg:nth-child(4) { margin-right: 2px; }
.burger { margin: 9px 0 0 auto; }
.underline.u2 { margin-left: 10px; width: 160px; }
.symb h3 { margin: 9px 0 4px 6px; }
.c-main { margin-left: 6px; width: 466px; }
.form { display: grid; grid-template-columns: 90px 300px 1fr; column-gap: 0; grid-template-rows: 28px 29px 28px 27px 27px 27.500px; margin: 3px 0 0 6px; align-items: center; letter-spacing: -.05px; }
.form > svg { margin-left: 7px; }
.form .off { background: #e8e8e8; border-color: #d6d6d6; color: #9a9a9a; padding-left: 5px; }
.form .ramp { height: 24px; }
.viridis { width: 278px; height: 16px; background: linear-gradient(90deg, #440154, #472c7a 13%, #3b518b 26%, #2c718e 39%, #21908d 51%, #27ad81 64%, #5cc863 77%, #aadc32 89%, #fde725 97%); }
.splitter { margin: 10px 0 0 6px; width: 466px; height: 9px; border: solid #cbcbcb; border-width: 2px 0; display: flex; justify-content: center; align-items: center; }
.ctabs { display: flex; align-items: flex-end; height: 31px; margin-left: 6px; font-size: 12px; }
.ctabs span { border: 1px solid #a8a8a8; border-bottom: 0; background: #f1f1f1; text-align: center; height: 19px; line-height: 20px; }
.ctabs .on { width: 56px; height: 22px; margin-bottom: -1px; background: #fafafa; z-index: 1; line-height: 22px; }
.ctabs .h { width: 68px; border-left: 0; } .ctabs .s { width: 47px; }
.cbox { margin-left: 6px; width: 465px; height: 491px; border: 1px solid #a8a8a8; background: #fafafa; padding: 0 7px 5px 7px; }
.more { height: 34px; display: flex; justify-content: flex-end; align-items: center; gap: 8px; padding: 3px 3px 0 0; font-size: 12px; letter-spacing: .1px; }
.ctable { height: 452px; border: 1px solid #c6c6c6; }
.cr { display: grid; grid-template-columns: 80px 103px 1fr; height: 27px; border-bottom: 1px solid #c6c6c6; border-right: 1px solid #c6c6c6; background: #fff; font-size: 11px; letter-spacing: .05px; }
.cr.alt { background: #ebebeb; }
.cr > span { border-right: 1px solid #c6c6c6; display: flex; align-items: center; padding: 3px 0 0 3px; }
.cr > span:first-child { padding: 0 6px 0 20px; justify-content: space-between; color: #666; }
.cr > span:nth-child(2) { padding-left: 9px; letter-spacing: -.25px; }
.cr > span:last-child { border: 0; }
.cr > .sp { padding-left: 7px; }
.cr em { font-style: normal; width: 16px; }
.cr.ch { height: 22px; background: #dfdfdf; font-weight: 500; color: #222; }
.cr.ch > span, .cr.ch > span:first-child { padding: 4px 0 0 6px; color: #222; letter-spacing: .05px; }
.btabs { display: flex; padding-left: 6px; }
.btabs span { padding: 3px 0 0; width: 47px; height: 21px; }
.btabs .on { width: 72px; background: #f7f9f9; border: 1px solid #cfcfcf; border-top: 0; margin-top: -1px; height: 22px; color: #0071ce; text-align: center; padding-top: 4px; }

.land path, .land use { stroke: #b2b2b2; stroke-width: 1; vector-effect: non-scaling-stroke; }
.fp { fill: #a27da8; } .fb { fill: #97b1c5; } .fg { fill: #99dabb; }
```
FILE: app.js
```js
// Field definitions: name, alias, type, number format, precision, scale, length, state
const fields = [
  ['MpAltitud', 'MpAltitud', 'Long', 'Numeric', '5', '0', '', ''],
  ['Restriccio', 'Restriccio', 'Text', '', '0', '0', '254', ''],
  ['Depto', 'Depto', 'Text', '', '0', '0', '50', ''],
  ['SHAPE_Leng', 'SHAPE_Leng', 'Double', 'Numeric', '0', '0', '', ''],
  ['SHAPE_Area', 'SHAPE_Area', 'Double', 'Numeric', '0', '0', '', ''],
  ['Ley6172000', 'Ley6172000', 'Text', '', '0', '0', '15', ''],
  ['Areakm2', 'Areakm2', 'Double', 'Numeric', '0', '0', '', ''],
  ['CNBJenks', 'Natural Breaks (Jenks)', 'Short', '', '', '', '', 'new'],
  ['CEqualInter', 'Equal Interval', 'Short', '', '', '', '', 'bad'],
  ['CQuantile', 'Quantile', 'Short', '', '', '', '', 'new'],
  ['CGeomInter', 'Geometrical Interval', 'Short', '', '', '', '', 'new'],
  ['CStdDev', 'Standard Deviation', 'Short', '', '', '', '', 'new']
];
const tick = '<span class="cb"><svg width="12" height="12"><use href="#check"/></svg></span>';
const box = '<span class="cb"></span>';
document.getElementById('rows').innerHTML = fields.map((f, i) => {
  const grey = f[7] ? '' : 'g';
  return `<div class="row ${i > 7 ? 'sel2' : ''}"><div class="${f[7]}"></div><div class="c">${tick}</div><div class="c">${box}</div>` +
    `<div class="${grey} ${f[7] === 'bad' ? 'edit' : ''}">${f[0]}</div><div>${f[1]}</div><div class="${grey}">${f[2]}</div>` +
    `<div class="c faint">${box}</div><div class="c">${box}</div><div>${f[3]}</div><div></div>` +
    `<div class="n">${f[4]}</div><div class="n">${f[5]}</div><div class="n">${f[6]}</div><div class="rest"></div></div>`;
}).join('');

// Municipality boundaries: Voronoi cells, denser along the mountain axis
let seed = 12345;
const rnd = () => (seed = (seed * 1664525 + 1013904223) % 4294967296) / 4294967296;
const pts = [];
for (let i = 0; i < 16000; i++) {
  const x = 560 + rnd() * 340, y = 165 + rnd() * 400;
  const axis = 850 - (y - 230) * .62;
  const r = 4.6 + rnd() * 2 + Math.min(6, Math.abs(x - axis + 25) / 22) + (y < 260 ? 2 : 0);
  if (pts.every(p => (p[0] - x) ** 2 + (p[1] - y) ** 2 > r * r)) pts.push([x, y]);
}
let d = '';
for (const p of pts) {
  let poly = [[p[0] - 20, p[1] - 20], [p[0] + 20, p[1] - 20], [p[0] + 20, p[1] + 20], [p[0] - 20, p[1] + 20]];
  for (const q of pts) {
    const dx = q[0] - p[0], dy = q[1] - p[1];
    if (q === p || dx * dx + dy * dy > 1600) continue;
    const side = v => (v[0] - (p[0] + q[0]) / 2) * dx + (v[1] - (p[1] + q[1]) / 2) * dy;
    const out = [];
    poly.forEach((a, i) => {
      const b = poly[(i + 1) % poly.length], sa = side(a), sb = side(b);
      if (sa <= 0) out.push(a);
      if (sa * sb < 0) { const t = sa / (sa - sb); out.push([a[0] + (b[0] - a[0]) * t, a[1] + (b[1] - a[1]) * t]); }
    });
    poly = out;
  }
  if (poly.length > 2) d += 'M' + poly.map(v => v[0].toFixed(1) + ' ' + v[1].toFixed(1)).join('L') + 'z';
}
document.getElementById('cells').setAttribute('d', d);
```
